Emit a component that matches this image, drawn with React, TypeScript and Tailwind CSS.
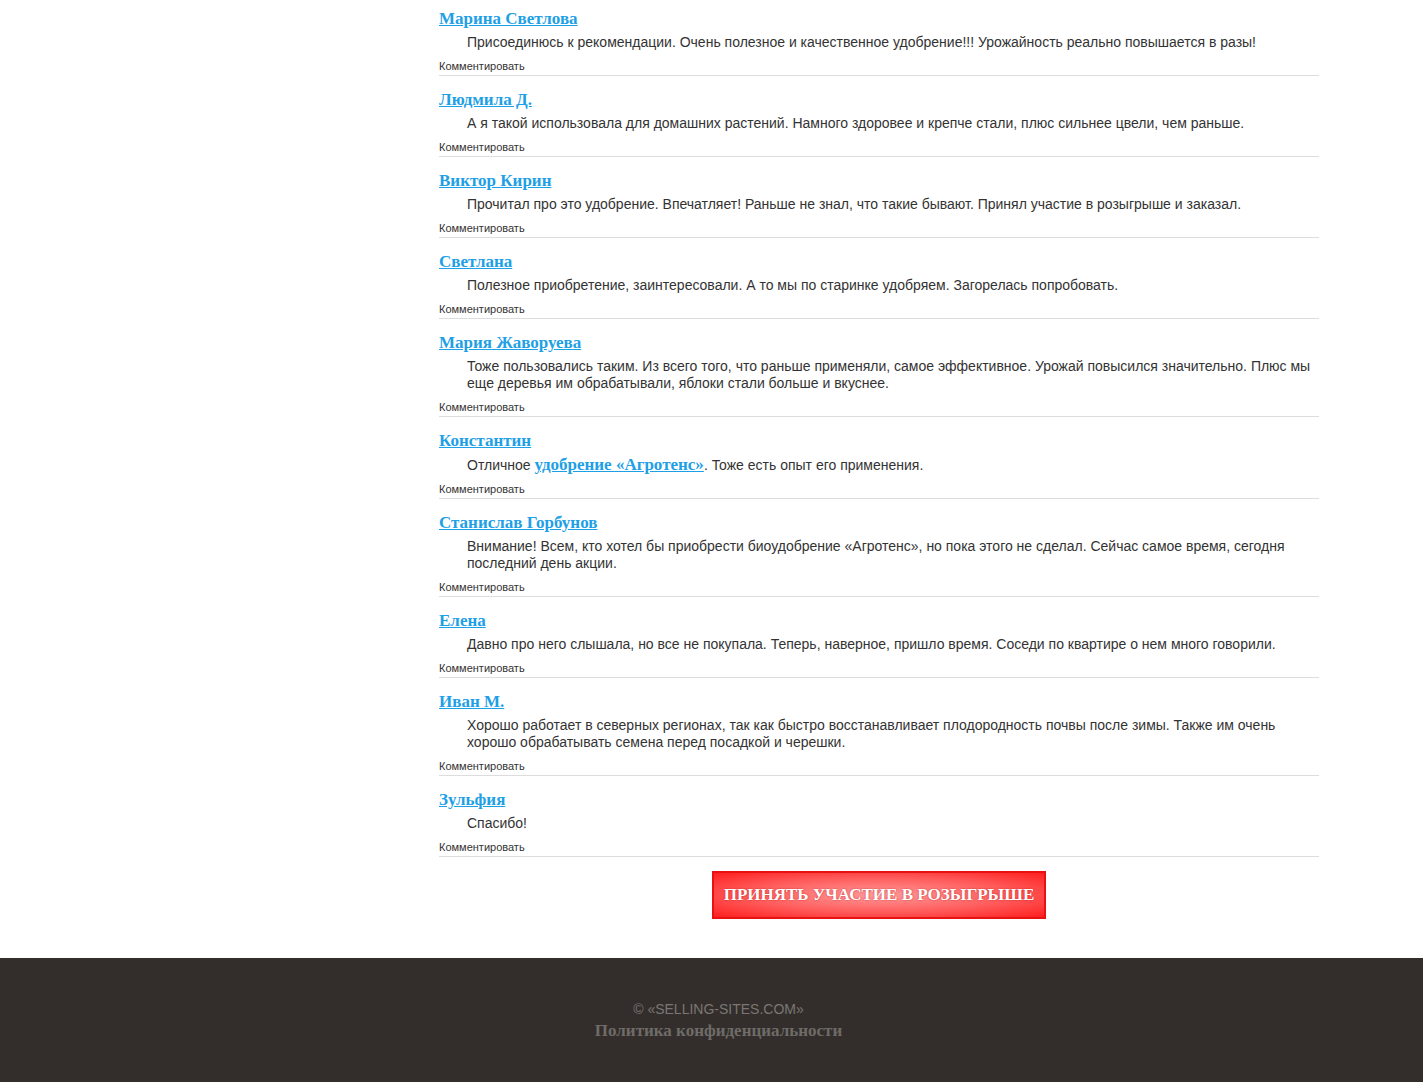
import React from "react";

type Review = {
  name: string;
  text: React.ReactNode;
};

const reviews: Review[] = [
  {
    name: "Марина Светлова",
    text: "Присоединюсь к рекомендации. Очень полезное и качественное удобрение!!! Урожайность реально повышается в разы!",
  },
  {
    name: "Людмила Д.",
    text: "А я такой использовала для домашних растений. Намного здоровее и крепче стали, плюс сильнее цвели, чем раньше.",
  },
  {
    name: "Виктор Кирин",
    text: "Прочитал про это удобрение. Впечатляет! Раньше не знал, что такие бывают. Принял участие в розыгрыше и заказал.",
  },
  {
    name: "Светлана",
    text: "Полезное приобретение, заинтересовали. А то мы по старинке удобряем. Загорелась попробовать.",
  },
  {
    name: "Мария Жаворуева",
    text: "Тоже пользовались таким. Из всего того, что раньше применяли, самое эффективное. Урожай повысился значительно. Плюс мы еще деревья им обрабатывали, яблоки стали больше и вкуснее.",
  },
  {
    name: "Константин",
    text: (
      <>
        Отличное{" "}
        <a
          href="#"
          className="font-['Liberation_Serif',serif] text-[17px] font-bold text-[#1ea0e6] underline"
        >
          удобрение «Агротенс»
        </a>
        . Тоже есть опыт его применения.
      </>
    ),
  },
  {
    name: "Станислав Горбунов",
    text: "Внимание! Всем, кто хотел бы приобрести биоудобрение «Агротенс», но пока этого не сделал. Сейчас самое время, сегодня последний день акции.",
  },
  {
    name: "Елена",
    text: "Давно про него слышала, но все не покупала. Теперь, наверное, пришло время. Соседи по квартире о нем много говорили.",
  },
  {
    name: "Иван М.",
    text: "Хорошо работает в северных регионах, так как быстро восстанавливает плодородность почвы после зимы. Также им очень хорошо обрабатывать семена перед посадкой и черешки.",
  },
  {
    name: "Зульфия",
    text: "Спасибо!",
  },
];

const ReviewItem = ({ review, first }: { review: Review; first: boolean }) => (
  <div className={`border-b border-[#dddddd] ${first ? "pt-[9px]" : "pt-[14px]"}`}>
    <a
      href="#"
      className="block h-[20px] font-['Liberation_Serif',serif] text-[17px] leading-[20px] font-bold text-[#1ea0e6] underline"
    >
      {review.name}
    </a>
    <p className="mt-[5px] pl-[28px] pr-[4px] font-['Liberation_Sans',Arial,sans-serif] text-[14px] leading-[17px] text-[#333333]">
      {review.text}
    </p>
    <div className="mt-[9px] mb-[2px] h-[13px] font-['Liberation_Sans',Arial,sans-serif] text-[11px] leading-[13px] text-[#333333]">
      Комментировать
    </div>
  </div>
);

const App = () => {
  return (
    <div className="min-h-screen bg-white flex flex-col">
      <div className="flex">
        <aside className="w-[439px] shrink-0" />
        <main className="w-[880px] shrink-0">
          {reviews.map((r, i) => (
            <ReviewItem key={r.name} review={r} first={i === 0} />
          ))}

          <div className="flex justify-center pt-[14px] pb-[39px]">
            <button
              type="button"
              className="h-[48px] w-[334px] border-2 border-[#e81212] bg-[radial-gradient(ellipse_at_center,#ff9a9a_0%,#ff5c5c_55%,#ff1f1f_100%)] font-['Liberation_Serif',serif] text-[17px] font-bold text-white uppercase [text-shadow:0_0_2px_rgba(150,0,0,0.6)]"
            >
              Принять участие в розыгрыше
            </button>
          </div>
        </main>
      </div>

      <footer className="h-[124px] bg-[#332e2b] pl-[14px] pt-[42px] text-center">
        <div className="font-['Liberation_Sans',Arial,sans-serif] text-[14px] leading-[18px] text-[#7a7673]">
          © «SELLING-SITES.COM»
        </div>
        <a
          href="#"
          className="mt-[3px] block font-['Liberation_Serif',serif] text-[17px] leading-[20px] font-bold text-[#6e6b68]"
        >
          Политика конфиденциальности
        </a>
      </footer>
    </div>
  );
};

export default App;
